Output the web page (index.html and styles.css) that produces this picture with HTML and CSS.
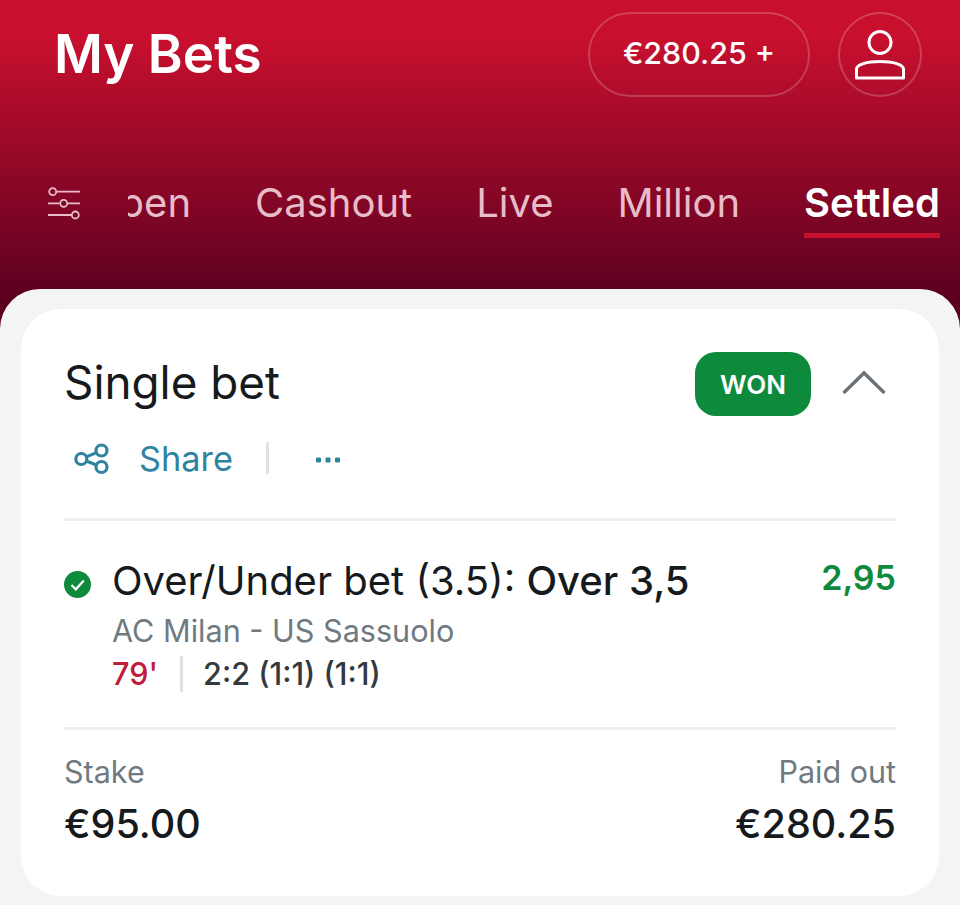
FILE: index.html
```html
<!DOCTYPE html>
<html lang="en">
<head>
<meta charset="utf-8">
<title>My Bets</title>
<link rel="stylesheet" href="styles.css">
</head>
<body>
<div class="page">
  <header class="hero">
    <div class="topbar">
      <h1 class="title">My Bets</h1>
      <div class="top-actions">
        <button class="balance">€280.25 +</button>
        <button class="avatar" aria-label="Account">
          <svg width="52" height="52" viewBox="0 0 52 52" fill="none" stroke="#fff" stroke-width="3"><circle cx="26" cy="13.500" r="11"/><path d="M2.500 49V40C2.500 35.500 13 32.500 26 32.500S49.500 35.500 49.500 40V49Z" stroke-linejoin="round"/></svg>
        </button>
      </div>
    </div>
    <nav class="tabbar">
      <svg class="filter" width="34" height="36" viewBox="0 0 34 36" fill="none" stroke="#e8bdc9" stroke-width="1.800"><path d="M10 6.700H33M1 18.300H12.500M21 18.300H33M1 30H24"/><circle cx="5.700" cy="6.700" r="3.500"/><circle cx="16.700" cy="18.300" r="3.500"/><circle cx="28.300" cy="30" r="3.500"/></svg>
      <div class="tabs-clip">
        <div class="tabs">
          <span class="tab">Open</span>
          <span class="tab">Cashout</span>
          <span class="tab">Live</span>
          <span class="tab">Million</span>
          <span class="tab active">Settled</span>
        </div>
      </div>
    </nav>
  </header>
  <main class="sheet">
    <section class="card">
      <div class="card-head">
        <h2 class="bet-type">Single bet</h2>
        <span class="badge">WON</span>
        <svg class="chevron" width="44" height="24" viewBox="0 0 44 24" fill="none" stroke="#6b7378" stroke-width="3.400"><path d="M1.500 23 22 3 42.500 23"/></svg>
      </div>
      <div class="share-row">
        <svg class="share-icon" width="36" height="34" viewBox="0 0 36 34" fill="none" stroke="#2f83a1" stroke-width="3.200"><circle cx="8.300" cy="18" r="5.500"/><circle cx="28.500" cy="9.500" r="5.500"/><circle cx="28.500" cy="26" r="5.500"/><path d="M13.300 15.900 23.500 11.600M13.300 20.100 23.500 23.900"/></svg>
        <span class="share">Share</span>
        <span class="vline"></span>
        <svg class="dots" width="24" height="6" viewBox="0 0 24 6" fill="#2f83a1"><rect x="0" y="0.500" width="5" height="5" rx="1"/><rect x="9.500" y="0.500" width="5" height="5" rx="1"/><rect x="19" y="0.500" width="5" height="5" rx="1"/></svg>
      </div>
      <div class="selection">
        <svg class="check" width="27" height="27" viewBox="0 0 27 27"><circle cx="13.500" cy="13.500" r="13.500" fill="#0e8a3c"/><path d="M7.500 14 11.800 18.300 19.800 9.500" fill="none" stroke="#fff" stroke-width="2.200"/></svg>
        <div class="sel-body">
          <div class="market">Over/Under bet (3.5): <b>Over 3,5</b></div>
          <div class="teams">AC Milan - US Sassuolo</div>
          <div class="score-row"><span class="minute">79'</span><span class="vline small"></span><span class="score">2:2 (1:1) (1:1)</span></div>
        </div>
        <div class="odds">2,95</div>
      </div>
      <div class="totals">
        <div class="total"><div class="label">Stake</div><div class="amount">€95.00</div></div>
        <div class="total right"><div class="label">Paid out</div><div class="amount">€280.25</div></div>
      </div>
    </section>
  </main>
</div>
</body>
</html>
```
FILE: styles.css
```css
* { box-sizing: border-box; }
html, body { margin: 0; padding: 0; }
body { width: 960px; height: 905px; overflow: hidden; background: #f3f5f5; font-family: Inter, "Liberation Sans", sans-serif; }
button { font-family: inherit; background: none; color: #fff; cursor: pointer; }
.page { display: flex; flex-direction: column; height: 905px; background: linear-gradient(#c8102e 0, #c8102e 36px, #5c0020 296px) top / 100% 330px no-repeat; }
.hero { height: 289px; padding-top: 12px; display: flex; flex-direction: column; flex: none; }
.topbar { display: flex; justify-content: space-between; align-items: center; height: 85px; padding: 0 38px 0 54px; }
.title { margin: 0; font-size: 53px; font-weight: 600; color: #fff; line-height: 85px; }
.top-actions { display: flex; gap: 28px; align-items: center; }
.balance { width: 222px; height: 85px; border: 2px solid rgba(255,255,255,.2); border-radius: 43px; font-size: 30.400px; font-weight: 500; padding: 0 0 4px; }
.avatar { width: 84px; height: 85px; border: 2px solid rgba(255,255,255,.2); border-radius: 50%; padding: 0; display: flex; align-items: center; justify-content: center; }
.tabbar { display: flex; align-items: flex-start; margin-top: 74px; padding-left: 47px; }
.filter { margin-top: 14px; flex: none; }
.tabs-clip { margin-left: 47px; flex: 1; overflow: hidden; }
.tabs { display: flex; gap: 64px; margin-left: -39px; width: max-content; }
.tab { font-size: 40px; color: #e8bdc9; line-height: 46px; height: 67px; padding-top: 9px; border-bottom: 5px solid transparent; font-weight: 400; }
.tab.active { color: #fff; font-weight: 600; border-bottom-color: #c8102e; }
.sheet { flex: 1; background: #f3f5f5; border-radius: 40px 40px 0 0; padding: 20px 21px 9px; }
.card { background: #fff; border-radius: 40px; height: 100%; padding: 43px 43px 0; }
.card-head { display: flex; align-items: center; height: 64px; }
.bet-type { margin: 0 0 4px; font-size: 45.800px; font-weight: 400; color: #161a1d; flex: 1; }
.badge { width: 116px; height: 64px; border-radius: 21px; background: #0e8a3c; color: #fff; font-size: 26px; font-weight: 600; display: flex; align-items: center; justify-content: center; }
.chevron { margin: 0 10px 5px 31px; }
.share-row { display: flex; align-items: center; height: 40px; margin-top: 22px; padding-left: 9px; }
.share { margin-left: 30px; font-size: 34.300px; color: #2f83a1; }
.vline { width: 3px; height: 32px; background: #dfe2e3; margin-left: 33px; }
.dots { margin: 3px 0 0 47px; }
.selection { display: flex; align-items: flex-start; margin-top: 40px; padding: 36px 0 31px; border-top: 3px solid #eceeef; border-bottom: 3px solid #eceeef; }
.check { margin-top: 14px; flex: none; }
.sel-body { flex: 1; margin-left: 21px; }
.market { font-size: 40px; color: #161a1d; line-height: 48px; }
.market b { font-weight: 500; }
.teams { font-size: 30.600px; color: #6f7a80; line-height: 40px; margin-top: 6px; }
.score-row { display: flex; align-items: center; height: 45px; }
.minute { font-size: 30.600px; color: #c01d3c; font-weight: 500; }
.vline.small { margin-left: 22px; height: 36px; }
.score { font-size: 30.600px; color: #33393d; margin-left: 20px; font-weight: 500; }
.odds { font-size: 34px; font-weight: 600; color: #0e8a3c; line-height: 42px; }
.totals { display: flex; justify-content: space-between; padding-top: 22px; }
.total.right { text-align: right; }
.label { font-size: 30.500px; color: #6f7a80; line-height: 40px; }
.amount { font-size: 39.500px; font-weight: 500; color: #161a1d; line-height: 50px; margin-top: 7px; }
```
